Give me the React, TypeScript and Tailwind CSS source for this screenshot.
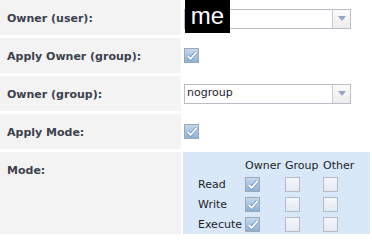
import React from "react"

function Checkbox({ checked }: { checked?: boolean }) {
  return (
    <span
      className={
        checked
          ? "flex h-[15px] w-[15px] items-center justify-center border border-[#9ea7b4] bg-linear-to-b from-[#c3d8ee] to-[#8db2d8]"
          : "flex h-[15px] w-[15px] items-center justify-center border border-[#b3bac6] bg-linear-to-b from-[#f5f8fb] to-[#e2e9f1]"
      }
    >
      {checked && (
        <svg width="12" height="11" viewBox="0 0 12 11">
          <path d="M1.6 6 L4.6 8.8 L10.6 1.8" fill="none" stroke="#5f89b8" strokeWidth="3.2" />
          <path d="M1.6 6 L4.6 8.8 L10.6 1.8" fill="none" stroke="#ffffff" strokeWidth="1.9" />
        </svg>
      )}
    </span>
  )
}

function Select({ value }: { value?: string }) {
  return (
    <div className="flex h-[20px] w-[167px] items-stretch border border-[#b9bec6] bg-white">
      <div className="flex flex-1 items-center pl-[2px] text-[11px] text-[#1c1c2e]">{value}</div>
      <div className="flex w-[18px] items-center justify-center border-l border-[#c9cdd3] bg-linear-to-b from-[#fbfbfb] to-[#ececec]">
        <svg width="8" height="5" viewBox="0 0 8 5">
          <path d="M0 0 H8 L4 5 Z" fill="#94a6c2" />
        </svg>
      </div>
    </div>
  )
}

function Row({ label, children }: { label: string; children?: React.ReactNode }) {
  return (
    <div className="flex h-[35px] gap-[2px]">
      <div className="w-[181px] bg-[#f3f3f3] pl-[7px] pt-[12px] text-[11px] font-bold leading-[13px] text-[#3b424e]">
        {label}
      </div>
      <div className="relative flex w-[187px] items-center pl-px">{children}</div>
    </div>
  )
}

const modes = [
  { name: "Read", owner: true },
  { name: "Write", owner: true },
  { name: "Execute", owner: true },
]

export default function App() {
  return (
    <div className="h-[234px] w-[372px] overflow-hidden bg-white font-['DejaVu_Sans',sans-serif]">
      <div className="flex flex-col gap-[3px]">
        <Row label="Owner (user):">
          <div className="pt-[2px]">
            <Select />
          </div>
          {/* redaction box over the select */}
          <div className="absolute left-[2px] top-0 flex h-[33px] w-[45px] items-center justify-center bg-black pb-[2px] font-['Liberation_Sans',sans-serif] text-[24px] leading-none text-white">
            me
          </div>
        </Row>
        <Row label="Apply Owner (group):">
          <Checkbox checked />
        </Row>
        <Row label="Owner (group):">
          <Select value="nogroup" />
        </Row>
        <Row label="Apply Mode:">
          <Checkbox checked />
        </Row>
        <div className="flex h-[90px] gap-[2px]">
          <div className="w-[181px] bg-[#f3f3f3] pl-[7px] pt-[12px] text-[11px] font-bold leading-[13px] text-[#3b424e]">
            Mode:
          </div>
          <div className="w-[187px] bg-[#d8e8f9] pl-[15px] pt-[7px] text-[11px] leading-[13px] text-[#1e1e1e]">
            <div className="grid grid-cols-[47px_40px_38px_40px]">
              <div className="h-[15px]" />
              <div className="h-[15px]">Owner</div>
              <div className="h-[15px]">Group</div>
              <div className="h-[15px]">Other</div>
              {modes.map((m) => (
                <React.Fragment key={m.name}>
                  <div className="flex h-[20px] items-center">{m.name}</div>
                  <div className="flex h-[20px] items-center">
                    <Checkbox checked={m.owner} />
                  </div>
                  <div className="flex h-[20px] items-center">
                    <Checkbox />
                  </div>
                  <div className="flex h-[20px] items-center">
                    <Checkbox />
                  </div>
                </React.Fragment>
              ))}
            </div>
          </div>
        </div>
      </div>
    </div>
  )
}
